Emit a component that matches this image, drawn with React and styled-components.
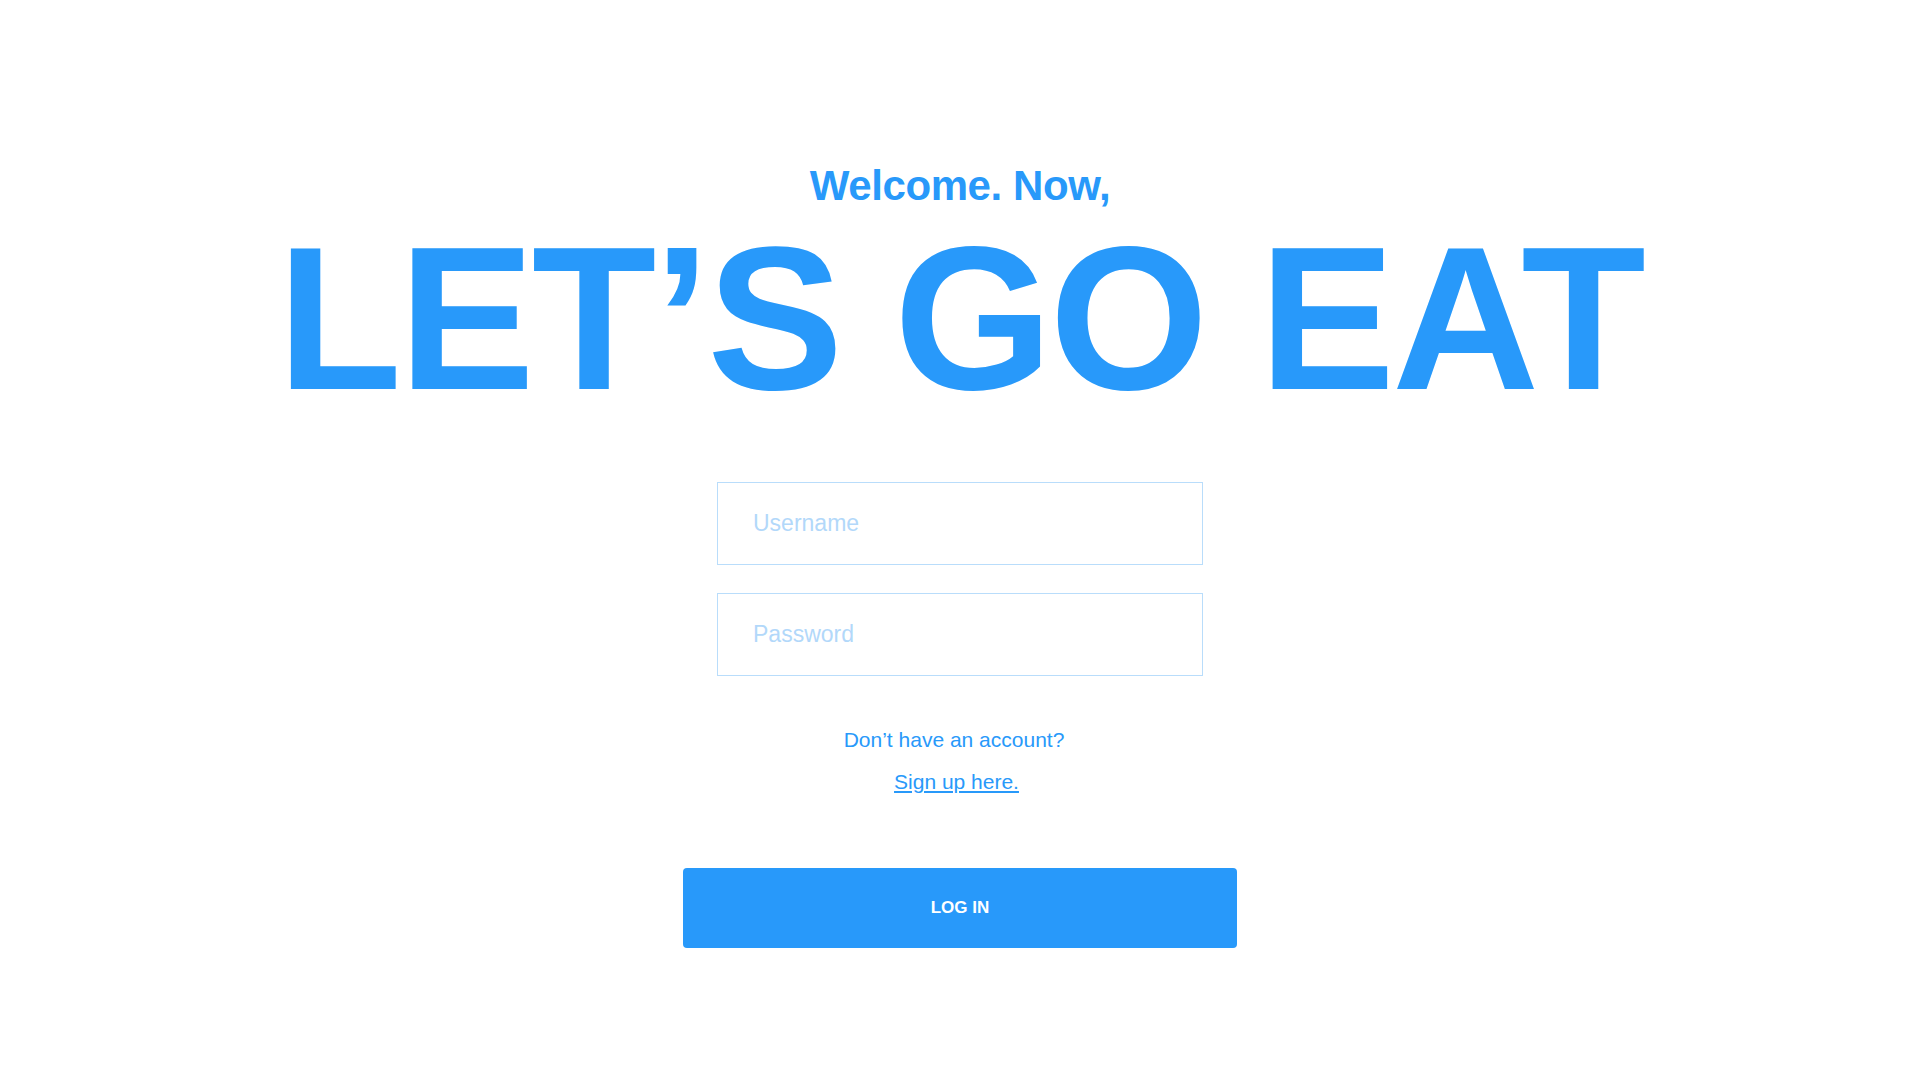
import React, { useState } from "react";
import styled, { createGlobalStyle } from "styled-components";

const colors = {
  primary: "#2899fa",
  light: "#b9ddfb",
  placeholder: "#b2d8fa",
};

const GlobalStyle = createGlobalStyle`
  html, body {
    margin: 0;
    padding: 0;
    background: #ffffff;
    font-family: "Liberation Sans", Arial, sans-serif;
  }
`;

const Page = styled.main`
  min-height: 100vh;
  box-sizing: border-box;
  padding-top: 162px;
  display: flex;
  flex-direction: column;
  align-items: center;
  color: ${colors.primary};
`;

const Welcome = styled.h2`
  margin: 0;
  font-size: 42px;
  line-height: 48px;
  font-weight: 700;
  letter-spacing: -0.4px;
`;

const Title = styled.h1`
  margin: 6px 0 0;
  font-size: 204px;
  line-height: 204px;
  font-weight: 700;
  letter-spacing: -3px;
  white-space: nowrap;
`;

const Form = styled.form`
  margin-top: 62px;
  display: flex;
  flex-direction: column;
  align-items: center;
`;

const Fields = styled.div`
  display: flex;
  flex-direction: column;
  gap: 28px;
`;

const Input = styled.input`
  box-sizing: border-box;
  width: 486px;
  height: 83px;
  padding: 0 35px;
  border: 1px solid ${colors.light};
  border-radius: 0;
  outline: none;
  font-family: inherit;
  font-size: 23px;
  color: ${colors.primary};
  background: #fff;

  &::placeholder {
    color: ${colors.placeholder};
  }
`;

const Hint = styled.p`
  margin: ${(p) => p.$top}px ${(p) => p.$nudge || 0}px 0 0;
  font-size: 21px;
  line-height: 24px;
`;

const SignUp = styled.a`
  color: ${colors.primary};
  text-decoration: underline;
  cursor: pointer;
`;

const Button = styled.button`
  margin-top: 74px;
  width: 554px;
  height: 80px;
  border: none;
  border-radius: 4px;
  background: ${colors.primary};
  color: #fff;
  font-family: inherit;
  font-size: 17px;
  font-weight: 700;
  cursor: pointer;
`;

function App() {
  const [username, setUsername] = useState("");
  const [password, setPassword] = useState("");

  return (
    <>
      <GlobalStyle />
      <Page>
        <Welcome>Welcome. Now,</Welcome>
        <Title>LET’S GO EAT</Title>
        <Form onSubmit={(e) => e.preventDefault()}>
          <Fields>
            <Input
              placeholder="Username"
              value={username}
              onChange={(e) => setUsername(e.target.value)}
            />
            <Input
              type="password"
              placeholder="Password"
              value={password}
              onChange={(e) => setPassword(e.target.value)}
            />
          </Fields>
          <Hint $top={52} $nudge={12}>
            Don’t have an account?
          </Hint>
          <Hint $top={18} $nudge={7}>
            <SignUp href="#signup">Sign up here.</SignUp>
          </Hint>
          <Button type="submit">LOG IN</Button>
        </Form>
      </Page>
    </>
  );
}

export default App;
